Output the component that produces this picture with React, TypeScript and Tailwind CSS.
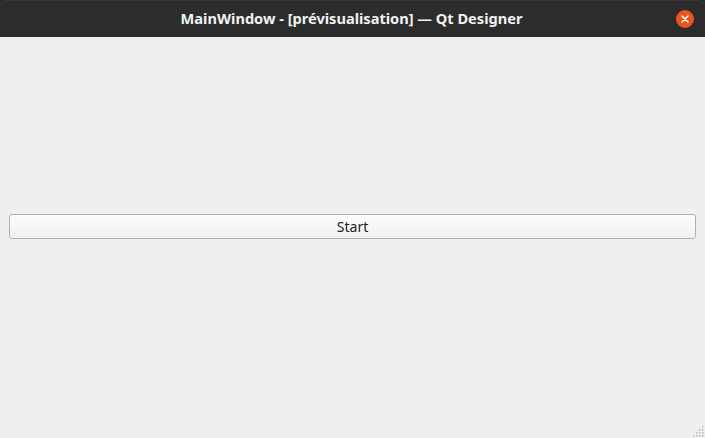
export default function App() {
  return (
    <div className="w-[705px] h-[438px] flex flex-col bg-[#2c2c2c] overflow-hidden" style={{ fontFamily: '"Noto Sans", "DejaVu Sans", sans-serif' }}>
      <div className="h-[37px] shrink-0 relative flex items-center justify-center rounded-t-[8px] bg-[#2c2c2c] border-t border-[#3a3a3a]">
        <span className="text-[14.6px] font-bold text-[#f2f2f2] pr-[2px]">MainWindow - [prévisualisation] — Qt Designer</span>
        <div className="absolute right-[11px] top-[9px] w-[18px] h-[18px] rounded-full bg-[#e95420] flex items-center justify-center">
          <svg width="8" height="8" viewBox="0 0 8 8">
            <path d="M1 1L7 7M7 1L1 7" stroke="#fff" strokeWidth="1.5" strokeLinecap="round" />
          </svg>
        </div>
      </div>
      <div className="flex-1 bg-[#efefef] flex flex-col justify-center px-[9px] relative">
        <button className="h-[25px] mt-[-22px] w-full rounded-[3px] border border-[#b0b0b0] bg-gradient-to-b from-[#fcfcfc] to-[#f1f1f1] text-[14px] text-[#222] leading-none">
          Start
        </button>
        <svg className="absolute right-[1px] bottom-[1px]" width="12" height="12" viewBox="0 0 12 12">
          {[[10, 1], [10, 4], [7, 4], [10, 7], [7, 7], [4, 7], [10, 10], [7, 10], [4, 10], [1, 10]].map(([x, y], i) => (
            <rect key={i} x={x} y={y} width="1.5" height="1.5" fill="#b5b5b5" />
          ))}
        </svg>
      </div>
    </div>
  );
}
